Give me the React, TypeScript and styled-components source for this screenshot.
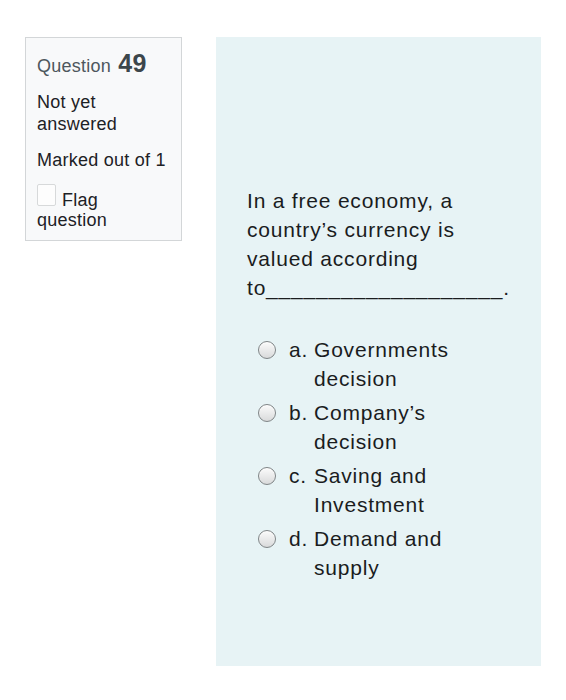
import React from "react";
import styled, { createGlobalStyle } from "styled-components";

const Global = createGlobalStyle`
  html, body { margin: 0; padding: 0; background: #ffffff; }
  body { font-family: "Liberation Sans", Arial, sans-serif; }
`;

const Page = styled.div`
  display: flex;
  align-items: flex-start;
  gap: 34px;
  padding: 37px 0 0 25px;
`;

const InfoBox = styled.div`
  box-sizing: border-box;
  width: 157px;
  height: 204px;
  background: #f8f9fa;
  border: 1px solid #d3d6d8;
  padding: 10px 8px 0 11px;
  display: flex;
  flex-direction: column;
  color: #1d2125;
  letter-spacing: 0.25px;
`;

const Title = styled.div`
  font-size: 18px;
  line-height: 30px;
  color: #4d575d;
`;

const Num = styled.span`
  font-size: 25px;
  font-weight: bold;
  color: #3c464b;
  margin-left: 2px;
`;

const InfoLine = styled.div<{ $mt: number }>`
  font-size: 18px;
  line-height: 22px;
  margin-top: ${(p) => p.$mt}px;
`;

const FlagLine = styled.div`
  font-size: 18px;
  line-height: 20px;
  margin-top: 13px;
`;

const CheckBox = styled.span`
  display: inline-block;
  box-sizing: border-box;
  width: 19px;
  height: 22px;
  border: 1px solid #d7d9da;
  border-radius: 2px;
  background: #fdfdfd;
  margin-right: 6px;
  vertical-align: baseline;
`;

const Panel = styled.div`
  box-sizing: border-box;
  width: 325px;
  height: 629px;
  background: #e7f3f5;
  padding: 149px 29px 0 31px;
  color: #1a1c1e;
  font-size: 21px;
  line-height: 29px;
  letter-spacing: 0.8px;
`;

const QText = styled.div`
  margin-bottom: 33px;
`;

const Options = styled.div`
  display: flex;
  flex-direction: column;
  gap: 5px;
  padding-left: 11px;
`;

const Option = styled.div`
  display: flex;
  align-items: flex-start;
`;

const Radio = styled.span`
  flex: none;
  box-sizing: border-box;
  width: 18px;
  height: 18px;
  margin-top: 6px;
  margin-right: 13px;
  border-radius: 50%;
  border: 1px solid #7f8486;
  background: linear-gradient(#fbfbfb, #d9dadb);
  box-shadow: inset 0 1px 1px rgba(255, 255, 255, 0.8);
`;

const Letter = styled.span`
  flex: none;
  min-width: 25px;
`;

const OptText = styled.span`
  flex: 1;
`;

const options = [
  { l: "a.", t: "Governments decision" },
  { l: "b.", t: "Company\u2019s decision" },
  { l: "c.", t: "Saving and Investment" },
  { l: "d.", t: "Demand and supply" },
];

export default function App() {
  return (
    <>
      <Global />
      <Page>
        <InfoBox>
          <Title>
            Question <Num>49</Num>
          </Title>
          <InfoLine $mt={10}>Not yet answered</InfoLine>
          <InfoLine $mt={14}>Marked out of 1</InfoLine>
          <FlagLine>
            <CheckBox />
            Flag question
          </FlagLine>
        </InfoBox>
        <Panel>
          <QText>
            In a free economy, a country{"\u2019"}s currency is valued according to___________________.
          </QText>
          <Options>
            {options.map((o) => (
              <Option key={o.l}>
                <Radio />
                <Letter>{o.l}</Letter>
                <OptText>{o.t}</OptText>
              </Option>
            ))}
          </Options>
        </Panel>
      </Page>
    </>
  );
}
